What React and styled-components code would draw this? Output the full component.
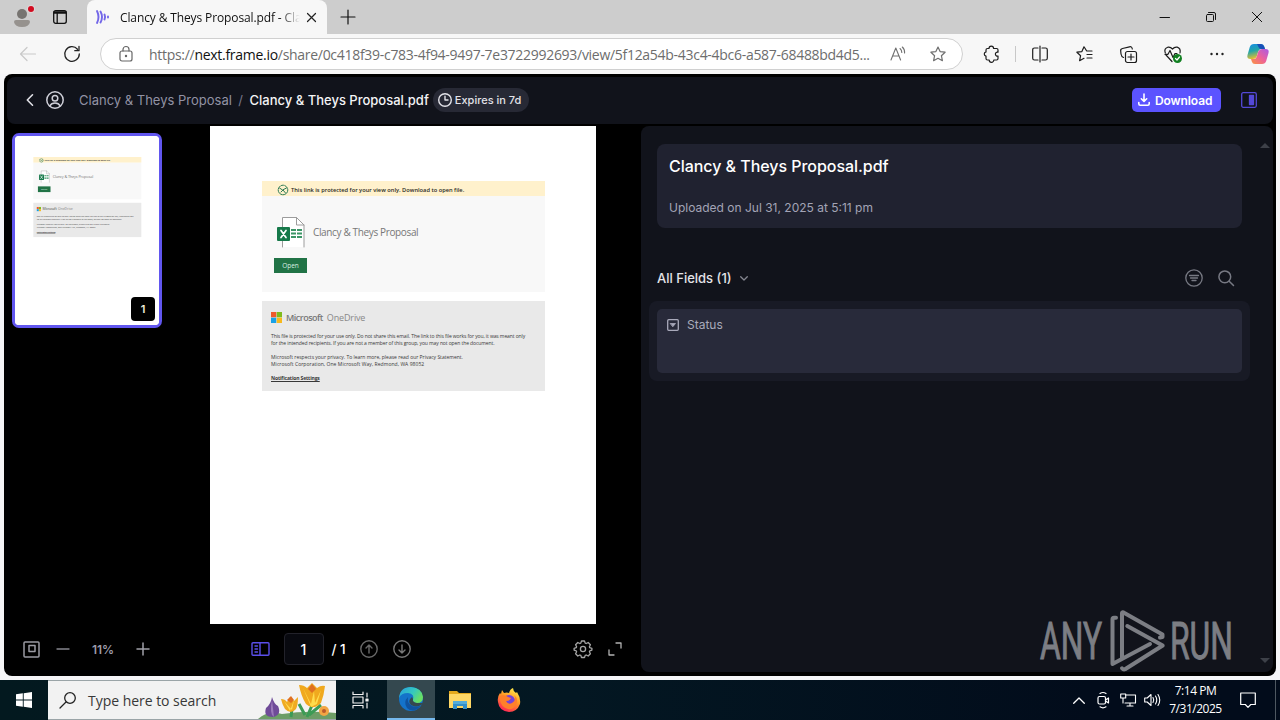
import React from "react";
import styled, { createGlobalStyle } from "styled-components";

const GlobalStyle = createGlobalStyle`
    * {
        box-sizing: border-box;
    }
    body {
        margin: 0;
        overflow: hidden;
        background: #f7f7f7;
        font-family: "Open Sans", "Noto Sans", sans-serif;
    }
    svg {
        display: block;
        flex: none;
        overflow: visible;
    }
`;

const Screen = styled.div`
    width: 1280px;
    height: 720px;
    display: flex;
    flex-direction: column;
    white-space: nowrap;
`;

const Label = styled.span`
    font-size: ${(props) => props.size}px;
    font-weight: ${(props) => props.weight || 400};
    letter-spacing: ${(props) => props.track || 0}px;
    color: ${(props) => props.color || "inherit"};
`;

/* browser */

const TabStrip = styled.div`
    height: 34px;
    flex: none;
    display: flex;
    background: #cdcdcd;
`;

const Slot = styled.div`
    width: ${(props) => props.w}px;
    height: 100%;
    flex: none;
    display: flex;
    align-items: center;
    justify-content: center;
`;

const Tab = styled.div`
    width: 240px;
    height: 34px;
    display: flex;
    align-items: center;
    padding: 0 9px 0 8px;
    background: #f7f7f7;
    border-radius: 8px 8px 0 0;
`;

const TabTitle = styled.div`
    width: 185px;
    flex: none;
    margin-left: 10px;
    font-size: 12px;
    letter-spacing: -0.12px;
    color: #111;
    mask-image: linear-gradient(to right, #000 160px, transparent 180px);
`;

const WindowButtons = styled.div`
    margin-left: auto;
    display: flex;
`;

const Toolbar = styled.div`
    height: 40px;
    flex: none;
    display: flex;
    align-items: center;
    background: #f7f7f7;
`;

const AddressBar = styled.div`
    width: 863px;
    height: 32px;
    margin: 0 7px 0 6px;
    display: flex;
    align-items: center;
    padding-left: 17px;
    background: #fff;
    border: 1px solid #d0d0d0;
    border-radius: 16px;
`;

const Url = styled.div`
    width: 723px;
    margin-left: 15px;
    font-size: 14px;
    letter-spacing: -0.29px;
    color: #6d6d6d;
    b {
        font-weight: 400;
        color: #111;
    }
`;

const Divider = styled.div`
    width: 1px;
    height: 16px;
    margin: 0 2px 0 1px;
    background: #c8c8c8;
`;

/* share page */

const Viewport = styled.div`
    height: 606px;
    flex: none;
    padding: 0 4px 4px;
    background: #f5f5f7;
`;

const Share = styled.div`
    height: 602px;
    padding: 3px 3px 4px;
    display: flex;
    flex-direction: column;
    gap: 2px;
    background: #000;
    border-radius: 8px;
    font-family: Inter, sans-serif;
`;

const Header = styled.div`
    height: 47px;
    flex: none;
    display: flex;
    align-items: center;
    padding: 0 16px 1px 19px;
    background: #11131b;
    border-radius: 8px;
`;

const Crumbs = styled.div`
    display: flex;
    align-items: center;
    gap: 6.5px;
    margin-left: 3px;
`;

const Badge = styled.div`
    width: 96px;
    height: 24px;
    margin-left: 4px;
    display: flex;
    align-items: center;
    gap: 3px;
    padding-left: 5px;
    background: #272935;
    color: #e2e2e8;
    border-radius: 12px;
`;

const DownloadButton = styled.div`
    width: 89px;
    height: 24px;
    margin: 0 20px 0 auto;
    display: flex;
    align-items: center;
    gap: 5px;
    padding-left: 6px;
    background: #5b53ff;
    color: #fff;
    border-radius: 5px;
`;

const Body = styled.div`
    flex: 1;
    display: flex;
`;

const Viewer = styled.div`
    width: 634px;
    display: flex;
    flex-direction: column;
`;

const Stage = styled.div`
    height: 498px;
    display: flex;
    align-items: flex-start;
`;

const Thumb = styled.div`
    position: relative;
    width: 150px;
    height: 195px;
    margin: 7px 48px 0 5px;
    overflow: hidden;
    background: #fff;
    border: 3px solid #6156ef;
    border-radius: 7px;
`;

const Shrink = styled.div`
    width: 144px;
    height: 189px;
    transform: translate(-1.5px, 0) scale(0.3816);
    transform-origin: 0 0;
`;

const ThumbNumber = styled.div`
    position: absolute;
    right: 4px;
    bottom: 4px;
    width: 24px;
    height: 24px;
    display: flex;
    align-items: center;
    justify-content: center;
    background: #000;
    color: #f2f0dc;
    border-radius: 4px;
    font-size: 11px;
    font-weight: 600;
`;

const Sheet = styled.div`
    width: 386px;
    height: 498px;
    padding: 55px 51px 0 52px;
    background: #fff;
    font-family: "Open Sans", sans-serif;
`;

const Notice = styled.div`
    height: 15px;
    display: flex;
    align-items: center;
    gap: 2px;
    padding: 2px 0 0 15px;
    background: #fff1cc;
    color: #2a2a24;
`;

const FileCard = styled.div`
    height: 96px;
    padding: 21px 12px 0;
    background: #f8f8f8;
`;

const FileRow = styled.div`
    display: flex;
    align-items: center;
    gap: 7px;
    padding-left: 3px;
    color: #777;
`;

const OpenButton = styled.div`
    width: 33px;
    height: 15px;
    margin-top: 11px;
    display: flex;
    align-items: center;
    justify-content: center;
    background: #217346;
    color: #d9eee1;
`;

const Footer = styled.div`
    height: 90px;
    margin-top: 9px;
    padding: 10px 0 0 9px;
    background: #e9e9e9;
    color: #383838;
`;

const Brand = styled.div`
    height: 12px;
    display: flex;
    align-items: center;
    gap: 4px;
`;

const Line = styled.div`
    height: 7px;
    margin-top: ${(props) => props.top || 0}px;
    font-size: 5px;
    line-height: 7px;
    letter-spacing: ${(props) => props.track || 0}px;
    font-weight: ${(props) => props.weight || 400};
    text-decoration: ${(props) => (props.link ? "underline" : "none")};
`;

const Controls = styled.div`
    height: 50px;
    display: flex;
    align-items: center;
    padding: 0 18px 0 15.5px;
    color: #85858d;
`;

const PageInput = styled.div`
    width: 40px;
    height: 32px;
    margin: 0 8px 0 14px;
    display: flex;
    align-items: center;
    justify-content: center;
    background: #08090f;
    border: 1px solid #22222a;
    border-radius: 4px;
    color: #fff;
    font-size: 14px;
    font-weight: 500;
`;

const Details = styled.div`
    position: relative;
    width: 632px;
    height: 546px;
    padding: 18px 23px 0 8px;
    background: #11131b;
    border-radius: 8px;
`;

const InfoCard = styled.div`
    height: 84px;
    margin: 0 8px;
    padding: 12px 12px 10px;
    display: flex;
    flex-direction: column;
    justify-content: space-between;
    background: #202230;
    border-radius: 8px;
    line-height: 20px;
    color: #fff;
`;

const FieldsHeader = styled.div`
    height: 32px;
    margin: 34px 8px 7px;
    display: flex;
    align-items: center;
    padding-right: 8px;
    color: #e3e3e8;
`;

const FieldTools = styled.div`
    margin-left: auto;
    display: flex;
    align-items: center;
    gap: 15px;
`;

const FieldGroup = styled.div`
    height: 80px;
    padding: 8px;
    background: #181a25;
    border-radius: 8px;
`;

const Field = styled.div`
    height: 64px;
    display: flex;
    align-items: flex-start;
    gap: 8px;
    padding: 7px 10px;
    background: #282a3a;
    border-radius: 5px;
    color: #a9aabb;
    line-height: 18px;
    svg {
        margin-top: 3px;
    }
`;

const ScrollArrow = styled.div`
    position: absolute;
    right: 3px;
    ${(props) => (props.down ? "bottom: 9px" : "top: 17px")};
    border: 5px solid transparent;
    border-top-width: ${(props) => (props.down ? 5 : 0)}px;
    border-bottom-width: ${(props) => (props.down ? 0 : 5)}px;
    border-${(props) => (props.down ? "top" : "bottom")}-color: #3d4048;
`;

const Watermark = styled.div`
    position: absolute;
    left: 397px;
    top: 483px;
`;

/* taskbar */

const Taskbar = styled.div`
    height: 40px;
    flex: none;
    display: flex;
    background: linear-gradient(to right, #03191f, #031722 45%, #020c1b 85%);
    color: #fff;
`;

const SearchBox = styled.div`
    width: 288px;
    height: 40px;
    display: flex;
    align-items: center;
    background: #f2f2f2;
    border: 1px solid #9aa4a7;
    border-width: 1px 0;
    padding-left: 11px;
    color: #383838;
`;

const SearchHint = styled.div`
    width: 170px;
    margin-left: 11px;
`;

const TaskButton = styled(Slot)`
    padding-right: ${(props) => props.nudge || 0}px;
    margin-left: ${(props) => props.gap || 0}px;
    background: ${(props) => (props.active ? "#34484f" : "transparent")};
    border-bottom: ${(props) => (props.active ? "2px solid #76b9ed" : "none")};
`;

const Tray = styled.div`
    margin-left: auto;
    display: flex;
`;

const Clock = styled.div`
    width: 62px;
    padding: 2px 0 0 1px;
    text-align: center;
    font-size: 12px;
    line-height: 18px;
    letter-spacing: -0.48px;
`;

const ShowDesktop = styled.div`
    width: 5px;
    border-left: 1px solid #4e5861;
`;

const Icon = ({ w = 20, h = w, stroke = 1, fill = "none", color = "currentColor", children }) => (
    <svg
        width={w}
        height={h}
        viewBox={`0 0 ${w} ${h}`}
        fill={fill}
        stroke={color}
        strokeWidth={stroke}
        strokeLinecap="round"
        strokeLinejoin="round"
    >
        {children}
    </svg>
);

const STAR = "M8 1l2.1 4.6 5 .6-3.7 3.5 1 5L8 12.3l-4.4 2.4 1-5L.9 6.2l5-.6z";

const Tabs = () => (
    <TabStrip>
        <Slot w={44}>
            <Icon w={22} h={20} color="none">
                <circle cx="11" cy="7" r="5" fill="#777471" />
                <path d="M3 15q0-2 2-2h12q2 0 2 2-1 5-8 5t-8-5z" fill="#96928e" />
                <circle cx="20" cy="2" r="4" fill="#ded6d6" />
                <circle cx="20" cy="2" r="3" fill="#d20b20" />
            </Icon>
        </Slot>
        <Slot w={32}>
            <Icon w={14} h={14} color="#111" stroke={1.3}>
                <rect x=".7" y=".7" width="12.6" height="12.6" rx="2" />
                <path d="M1 2h12M1 3.2h12M4.2 4v9" />
            </Icon>
        </Slot>
        <Slot w={11} />
        <Tab>
            <Icon w={15} h={16} color="#7367e8" stroke={1.9}>
                <path d="M2 2q3 6 0 12M5.5 2.500q3 5.500 0 11M9.500 5.500q1.200 2.500 0 5M13 7.500v1" />
            </Icon>
            <TabTitle>Clancy &amp; Theys Proposal.pdf - Cla</TabTitle>
            <Slot w={12}>
                <Icon w={9} color="#222" stroke={1.2}>
                    <path d="M.5.5l8 8M8.500.500l-8 8" />
                </Icon>
            </Slot>
        </Tab>
        <Slot w={42}>
            <Icon w={14} color="#111" stroke={1.2}>
                <path d="M7 0v14M0 7h14" />
            </Icon>
        </Slot>
        <WindowButtons>
            <Slot w={46}>
                <Icon w={10} color="#111">
                    <path d="M0 5.500h9.500" />
                </Icon>
            </Slot>
            <Slot w={46}>
                <Icon w={10} color="#111">
                    <rect x=".5" y="2.500" width="7" height="7" rx="1" />
                    <path d="M2.500.5H8Q9.500.5 9.500 2v5.500" />
                </Icon>
            </Slot>
            <Slot w={46}>
                <Icon w={10} color="#111">
                    <path d="M.3.3l9.400 9.400M9.700.3L.3 9.700" />
                </Icon>
            </Slot>
        </WindowButtons>
    </TabStrip>
);

const AddressRow = () => (
    <Toolbar>
        <Slot w={50}>
            <svg width="6" height="1" />
            <Icon w={16} h={14} color="#c9c9c9" stroke={1.2}>
                <path d="M15.500 7H.5M7 .5L.5 7 7 13.500" />
            </Icon>
        </Slot>
        <Slot w={44}>
            <Icon w={16} color="#222" stroke={1.3}>
                <path d="M15.300 8A7.300 7.300 0 1 1 13.500 3.200M15 0.500v4.200h-4.200" />
            </Icon>
        </Slot>
        <AddressBar>
            <Icon w={16} color="#666" stroke={1.2}>
                <rect x="2" y="5" width="12" height="10" rx="2" />
                <path d="M5 5V3.500a3 3 0 0 1 6 0V5" />
                <circle cx="8" cy="10" r=".6" fill="#666" />
            </Icon>
            <Url>
                https://<b>next.frame.io</b>
                /share/0c418f39-c783-4f94-9497-7e3722992693/view/5f12a54b-43c4-4bc6-a587-68488bd4d5...
            </Url>
            <Slot w={52}>
                <Icon w={16} color="#707070" stroke={1.1}>
                    <path d="M1 14L5.800 2l4.800 12M2.700 10h6.200M10 2.500q1.800 1.500 1.800 4M12.300 1q2.500 2.200 2.300 6" />
                </Icon>
            </Slot>
            <Slot w={28}>
                <Icon w={16} color="#707070" stroke={1.2}>
                    <path d={STAR} />
                </Icon>
            </Slot>
        </AddressBar>
        <Slot w={44}>
            <Icon w={16} color="#1d1d1d" stroke={1.2}>
                <path d="M5 2.500a2.300 2.300 0 0 1 4.600 0h3q1.400 0 1.400 1.400v2.300a2 2 0 1 0 0 3.800v2.500q0 1.500-1.400 1.500H9.800a2.300 2.300 0 0 1-4.600 0H3.500Q2 14 2 12.500v-2.300a2.200 2.200 0 0 1 0-4.300V4q0-1.500 1.500-1.500z" />
            </Icon>
        </Slot>
        <Divider />
        <Slot w={44}>
            <Icon w={16} color="#1d1d1d" stroke={1.2}>
                <path d="M6 2H2.500Q.7 2 .7 3.800v8.400q0 1.800 1.800 1.800H6M8 0v16M10 2h3.500q1.800 0 1.800 1.800v8.400q0 1.800-1.800 1.800H10" />
            </Icon>
        </Slot>
        <Slot w={44}>
            <Icon w={17} h={16} color="#1d1d1d" stroke={1.2}>
                <path d="M16 5h-5.300L8 .8 5.900 5.600l-5 .6 3.700 3.500-1 5L8 12.300M11 8.500h5M11 12h5" />
            </Icon>
        </Slot>
        <Slot w={44}>
            <Icon w={17} h={17} color="#1d1d1d" stroke={1.2}>
                <rect x="5.500" y="5.500" width="11" height="11" rx="2" />
                <path d="M11 8v6M8 11h6M3.500 11.500Q1.500 11 1 8L.7 5Q.3 3 2.500 2.500L9.500.8Q12 .3 12.300 3" />
            </Icon>
        </Slot>
        <Slot w={46}>
            <Icon w={18} h={17} color="#1d1d1d" stroke={1.2}>
                <path d="M1.300 7Q-.3 2.500 3.800 1.200 6.500.7 8.500 3 10.500.7 13.200 1.200 17 2.300 16 7M2 9l6 6.500M1 8.300h3L6 4.500l3 7 2-4h2" />
                <circle cx="13.500" cy="12.500" r="4.500" fill="#128022" stroke="none" />
                <path d="M11.500 12.500l1.500 1.500 2.500-3" stroke="#fff" />
            </Icon>
        </Slot>
        <Slot w={41}>
            <Icon w={14} h={4} fill="#222" color="none">
                <circle cx="1.500" cy="2" r="1.200" />
                <circle cx="7" cy="2" r="1.200" />
                <circle cx="12.500" cy="2" r="1.200" />
            </Icon>
        </Slot>
        <Slot w={41}>
            <Icon w={22} h={20} color="none">
                <defs>
                    <linearGradient id="cpA" x1="0" y1="0" x2=".3" y2="1">
                        <stop stopColor="#188ce8" />
                        <stop offset=".5" stopColor="#22a5a9" />
                        <stop offset="1" stopColor="#e9bf2d" />
                    </linearGradient>
                    <linearGradient id="cpB" x1="1" y1="0" x2="0" y2="1">
                        <stop stopColor="#a95be6" />
                        <stop offset=".5" stopColor="#ed619b" />
                        <stop offset="1" stopColor="#fb963f" />
                    </linearGradient>
                </defs>
                <path d="M7 0h7q2.500 0 3.200 2.500L18 5h-4q-2 0-2.800 2.500l-1.500 5Q8.700 15 6 15H3.500Q-.5 15 .5 11l2.300-8Q3.700 0 7 0z" fill="url(#cpA)" />
                <path d="M10 0h4q2.500 0 3.200 2.500L18 5h-4q-2 0-2.500-2z" fill="#1850b8" />
                <path d="M15 20H8q-2.500 0-3.200-2.500L4 15h3q2 0 2.800-2.500l1.500-5Q12.300 5 15 5h3.500q4 0 3 4l-2.300 8Q18.300 20 15 20z" fill="url(#cpB)" />
            </Icon>
        </Slot>
    </Toolbar>
);

const PdfPage = () => (
    <Sheet>
        <Notice>
            <Icon w={12} color="#2c7b55">
                <circle cx="6" cy="6" r="4.800" strokeDasharray="3 1" />
                <path d="M2.500 4l3 2 4-2M4 8l2-2 2.500 3" />
            </Icon>
            <Label size={5.7} weight={600} track={0.01}>
                This link is protected for your view only. Download to open file.
            </Label>
        </Notice>
        <FileCard>
            <FileRow>
                <Icon w={29} h={30} color="none">
                    <path d="M5.500 30V.5h14l7.500 7.500v22" fill="#fff" stroke="#9c9c9c" />
                    <path d="M19.500 .5V8H27" stroke="#9c9c9c" />
                    <path d="M14 12h5v2h-5zm6 0h5v2h-5zm-6 3.500h5v2h-5zm6 0h5v2h-5zm-6 3.500h5v2h-5zm6 0h5v2h-5z" fill="#3c9566" />
                    <rect x="0" y="10" width="13" height="14" rx="1" fill="#16794a" />
                    <path d="M4 13.500l5 7M9 13.500l-5 7" stroke="#fff" strokeWidth="1.700" />
                </Icon>
                <Label size={10} track={-0.36}>
                    Clancy &amp; Theys Proposal
                </Label>
            </FileRow>
            <OpenButton>
                <Label size={6.5}>Open</Label>
            </OpenButton>
        </FileCard>
        <Footer>
            <Brand>
                <Icon w={11} color="none">
                    <rect width="5.300" height="5.300" fill="#ef5a2c" />
                    <rect x="5.700" width="5.300" height="5.300" fill="#80bb1c" />
                    <rect y="5.700" width="5.300" height="5.300" fill="#19a1e6" />
                    <rect x="5.700" y="5.700" width="5.300" height="5.300" fill="#f8b91c" />
                </Icon>
                <Label size={9} weight={600} track={-0.5} color="#777">
                    Microsoft
                </Label>
                <Label size={9} track={-0.15} color="#888">
                    OneDrive
                </Label>
            </Brand>
            <Line top={10} track={-0.095}>
                This file is protected for your use only. Do not share this email. The link to this file works for you, it was meant only
            </Line>
            <Line track={-0.09}>
                for the intended recipients. If you are not a member of this group, you may not open the document.
            </Line>
            <Line top={7}>
                Microsoft respects your privacy. To learn more, please read our Privacy Statement.
            </Line>
            <Line track={0.06}>Microsoft Corporation, One Microsoft Way, Redmond, WA 98052</Line>
            <Line top={7} weight={700} track={-0.13} link>
                Notification Settings
            </Line>
        </Footer>
    </Sheet>
);

const ShareHeader = () => (
    <Header>
        <Icon w={8} h={12} color="#e1e1e7" stroke={1.6}>
            <path d="M6.500.8L1.300 6l5.200 5.200" />
        </Icon>
        <Slot w={42}>
            <Icon w={18} color="#cfcfd8" stroke={1.5}>
                <circle cx="9" cy="9" r="8.200" />
                <circle cx="9" cy="7.300" r="2.800" />
                <path d="M3.800 15q1.500-3 5.200-3t5.200 3" />
            </Icon>
        </Slot>
        <Crumbs>
            <Label size={13} color="#9292a4">
                Clancy &amp; Theys Proposal
            </Label>
            <Label size={13} color="#77778a">
                /
            </Label>
            <Label size={13} weight={500} color="#f4f4f6">
                Clancy &amp; Theys Proposal.pdf
            </Label>
        </Crumbs>
        <Badge>
            <Icon w={14} stroke={1.4}>
                <circle cx="7" cy="7" r="6.300" />
                <path d="M7 3.300V7h3" />
            </Icon>
            <Label size={11} weight={500}>
                Expires in 7d
            </Label>
        </Badge>
        <DownloadButton>
            <Icon w={12} stroke={1.6}>
                <path d="M6 0v7M3.300 4.800L6 7.500l2.700-2.700M.8 8.500v1.300q0 1.400 1.400 1.400h7.600q1.400 0 1.400-1.400V8.500" />
            </Icon>
            <Label size={12} weight={600} track={-0.1}>
                Download
            </Label>
        </DownloadButton>
        <Icon w={16} color="#5449d8" stroke={1.3}>
            <rect x=".7" y=".7" width="14.600" height="14.600" rx="1.500" />
            <rect x="8.500" y="3.500" width="4" height="9" fill="#5449d8" />
        </Icon>
    </Header>
);

const ViewerControls = () => (
    <Controls>
        <Icon w={17} color="#9a9aa2" stroke={1.5}>
            <rect x="1" y="1" width="15" height="15" rx="1" />
            <path d="M6 4.500h6v6H6z" />
        </Icon>
        <Slot w={46}>
            <Icon w={12} stroke={1.3}>
                <path d="M0 6h12" />
            </Icon>
        </Slot>
        <Slot w={35}>
            <Label size={12} weight={600} color="#9b9ba8">
                11%
            </Label>
        </Slot>
        <Slot w={45}>
            <Icon w={12} stroke={1.5} color="#a0a0a8">
                <path d="M0 6h12M6 0v12" />
            </Icon>
        </Slot>
        <Slot w={85} />
        <Icon w={19} h={14} color="#5b4fea" stroke={1.4}>
            <rect x="1" y=".7" width="17" height="12.600" rx="1" />
            <path d="M9 1v12M4 4h2.500M4 7h2.500M4 10h2.500" />
        </Icon>
        <PageInput>1</PageInput>
        <Label size={13.5} weight={500} color="#fff">
            / 1
        </Label>
        <Slot w={47}>
            <Icon w={18} color="#696969" stroke={1.4}>
                <circle cx="9" cy="9" r="8.200" />
                <path d="M9 13V5M6 8l3-3 3 3" />
            </Icon>
        </Slot>
        <Slot w={18}>
            <Icon w={18} color="#777" stroke={1.4}>
                <circle cx="9" cy="9" r="8.200" />
                <path d="M9 5v8M6 10l3 3 3-3" />
            </Icon>
        </Slot>
        <Slot w={163} />
        <Icon w={18} color="#a5a5a5" stroke={1.3}>
            <path d="M7.500 1h3l.7 2.100 1 .4 2-1 2.200 2.200-1 2 .4 1 2.100.6v1.800l-2.100.7-.4 1 1 2-2.200 2.200-2-1-1 .4-.7 2.100h-3l-.7-2.100-1-.4-2 1-2.200-2.200 1-2-.4-1L.1 10.100V8.300l2.100-.6.4-1-1-2 2.200-2.200 2 1 1-.4z" />
            <circle cx="9" cy="9" r="2.600" />
        </Icon>
        <svg width="16" height="1" />
        <Icon w={14} color="#b3b3b3" stroke={1.3}>
            <path d="M8 1h5v5M1 8v5h5" />
        </Icon>
    </Controls>
);

const AnyRun = () => (
    <Watermark>
        <svg width="194" height="64" viewBox="0 0 194 64" fill="#7c7e84" fontFamily="Roboto" fontSize="51">
            <text x="2" y="49.500" textLength="62" lengthAdjust="spacingAndGlyphs" stroke="#7c7e84" strokeWidth="1">
                ANY
            </text>
            <g fill="none" stroke="#7c7e84" strokeWidth="4" strokeLinecap="round" strokeLinejoin="round">
                <path d="M78 8.700h-2q-1.500 0-1.500 1.500V55L112 35" />
                <path d="M84 49V4q0-1 1.500-.5l39 22v2.500l-2.500.5" />
                <path d="M89.300 17l35.400 19.500L87 60.300q-1.500.7-3-1" />
            </g>
            <text x="132" y="49.500" textLength="63" lengthAdjust="spacingAndGlyphs" stroke="#7c7e84" strokeWidth="1">
                RUN
            </text>
        </svg>
    </Watermark>
);

const DetailsPanel = () => (
    <Details>
        <InfoCard>
            <Label size={16} weight={500} track={-0.04}>
                Clancy &amp; Theys Proposal.pdf
            </Label>
            <Label size={12} color="#a3a4b6">
                Uploaded on Jul 31, 2025 at 5:11 pm
            </Label>
        </InfoCard>
        <FieldsHeader>
            <Label size={13} weight={500}>
                All Fields (1)
            </Label>
            <Slot w={25}>
                <Icon w={8} h={5} color="#858690" stroke={1.3}>
                    <path d="M.7.7L4 4 7.300.7" />
                </Icon>
            </Slot>
            <FieldTools>
                <Icon w={18} color="#777983" stroke={1.3}>
                    <circle cx="9" cy="9" r="8.200" />
                    <path d="M4.500 6.500h9M5.500 9h7M7 11.500h4" />
                </Icon>
                <Icon w={16} color="#777983" stroke={1.5}>
                    <circle cx="6.800" cy="6.800" r="5.900" />
                    <path d="M11.200 11.200l4.300 4.300" />
                </Icon>
            </FieldTools>
        </FieldsHeader>
        <FieldGroup>
            <Field>
                <Icon w={12} stroke={1.3}>
                    <rect x=".7" y=".7" width="10.600" height="10.600" rx="1" />
                    <path d="M3.500 4.500h5L6 7.500z" fill="currentColor" strokeWidth=".8" />
                </Icon>
                <Label size={12}>Status</Label>
            </Field>
        </FieldGroup>
        <ScrollArrow />
        <ScrollArrow down />
        <AnyRun />
    </Details>
);

const Flowers = () => (
    <svg width="78" height="38" viewBox="0 0 78 38">
        <path d="M0 38q10-9 24-5 26-4 54-1v6z" fill="#6d9d66" />
        <path d="M33 36l1-8M49 36l6-14M51 34l12-10M47 34l-6-11" stroke="#3c9b55" strokeWidth="3" />
        <path d="M14 16q2 7 6 9 4 9-5 11-10 0-7-9 5-4 6-11z" fill="#6f4b98" />
        <path d="M14 19l2 17q-5-3-2-17z" fill="#9b79ba" />
        <path d="M23 18q4 0 6 3l3-5 4 4 4-4q0 8-2 12-5 6-11 0-3-5-4-10z" fill="#f0ab20" />
        <path d="M26 20l6 10 4-11-2 10z" fill="#ffdc53" />
        <path d="M41 4q5 0 8 3l5-5 5 5q4-3 8-2-1 9-4 17-8 8-15 1-5-8-7-19z" fill="#f0a91e" />
        <path d="M45 7l8 16 3-13 1 12 6-13-4 14-6 3z" fill="#ffdc4c" />
        <path d="M50 8l4-5 4 5-4 4zM29 19l4-4 3 4-3 3z" fill="#df7020" />
        <circle cx="66" cy="30" r="5" fill="#f2a543" />
        <circle cx="66" cy="30" r="2" fill="#b95b2c" />
    </svg>
);

const WindowsBar = () => (
    <Taskbar>
        <Slot w={48}>
            <Icon w={16} fill="#fff" color="none">
                <path d="M0 2.300l6.800-1v6.300H0zM7.700 1.200L16 0v7.600H7.700zM0 8.500h6.800v6.300l-6.800-1zM7.700 8.500H16V16l-8.300-1.200z" />
            </Icon>
        </Slot>
        <SearchBox>
            <Icon w={18} color="#222" stroke={1.3}>
                <circle cx="11" cy="7" r="5.300" />
                <path d="M7 11L1 17" />
            </Icon>
            <SearchHint>
                <Label size={14} track={-0.03}>
                    Type here to search
                </Label>
            </SearchHint>
            <Flowers />
        </SearchBox>
        <TaskButton w={51} nudge={3}>
            <Icon w={17} h={16} color="#f1f1f1" stroke={1.2}>
                <path d="M1 0v2.500h10V0M1 16v-2.500h10V16M1 5h10v6H1zM15 1v4M15 11v5" />
                <path d="M14 7h2v2h-2z" fill="#fff" />
            </Icon>
        </TaskButton>
        <TaskButton w={48} active>
            <svg width="24" height="24" viewBox="0 0 24 24">
                <defs>
                    <linearGradient id="edA" x1="0" y1="0" x2="1" y2=".5">
                        <stop stopColor="#279fe1" />
                        <stop offset=".6" stopColor="#35c8be" />
                        <stop offset="1" stopColor="#69df63" />
                    </linearGradient>
                </defs>
                <circle cx="12" cy="12" r="12" fill="#1473ca" />
                <path d="M0 11Q1 0 12 0q11 1 12 10 0 6-6 6-5 0-4-3Q16 7 9 6 2 6 0 11z" fill="url(#edA)" />
                <path d="M9 10q-5 5-1 11 3 3 7 2.500 4-1 7-5-7 3-11-1-3-3-2-7.500z" fill="#10539f" />
                <path d="M13 10q-5 4-1 8 5 3 11-.5l1-1V16h-6q-5-1-4-4z" fill="#34484f" />
            </svg>
        </TaskButton>
        <TaskButton w={48} gap={1}>
            <svg width="22" height="20" viewBox="0 0 22 20">
                <path d="M0 1h8l2 2h12v15H0z" fill="#e5a91d" />
                <path d="M0 4h22v14H0z" fill="#ffd765" />
                <path d="M4 12h14v7h-4v-3H8v3H4z" fill="#348fc9" />
                <path d="M4 11h14v3H4z" fill="#55acd9" />
            </svg>
        </TaskButton>
        <TaskButton w={48} gap={1}>
            <svg width="24" height="24" viewBox="0 0 24 24">
                <defs>
                    <linearGradient id="ffA" x1=".8" y1="0" x2=".3" y2="1">
                        <stop stopColor="#fff34d" />
                        <stop offset=".45" stopColor="#ff9925" />
                        <stop offset="1" stopColor="#ff2258" />
                    </linearGradient>
                </defs>
                <path d="M5 2l2 3q3-1 5 0 1-4 4-5 0 3 3 5l1-1q4 6 3 12-3 8-11 8Q2 23 1 14 0 9 3 5l1 1z" fill="url(#ffA)" />
                <circle cx="12" cy="13" r="6" fill="#7543d8" />
                <path d="M3 8q5-2 8 1l3 1q-1 3-5 3 2 4 6 2 5-3 2-8 5 4 2 10-3 5-8 4-7-2-8-9z" fill="#ff802b" />
            </svg>
        </TaskButton>
        <Tray>
            <Slot w={24}>
                <Icon w={12} h={7} stroke={1.3}>
                    <path d="M.7 6.300L6 1l5.300 5.300" />
                </Icon>
            </Slot>
            <Slot w={25}>
                <Icon w={11} h={16} stroke={1.2}>
                    <rect x="0" y="4.500" width="7.500" height="7.500" rx="1.500" />
                    <path d="M7.500 8l3-2v5l-3-2M2 1.500q3-2 6 0M2 14.800q3 2 6 0" />
                </Icon>
            </Slot>
            <Slot w={24}>
                <Icon w={17} h={14} stroke={1.1}>
                    <path d="M5.500 2h10v8H5M10 10v3M7 13h6M.7 1h5v4h-5zM3 5v5" />
                </Icon>
            </Slot>
            <Slot w={24}>
                <Icon w={17} h={14} stroke={1.1}>
                    <path d="M.7 5h2.500L7 1.500v11L3.200 9H.7zM9 4.500q1.500 2.500 0 5M11.500 3q2.500 4 0 8M14 1.500q3.500 5.500 0 11" />
                </Icon>
            </Slot>
            <Clock>
                <div>7:14 PM</div>
                <div>7/31/2025</div>
            </Clock>
            <Slot w={43}>
                <Icon w={16} stroke={1.2}>
                    <path d="M.7 1h14.600v11.500h-4.500L8 15.300l-2.700-2.800H.7z" />
                </Icon>
            </Slot>
            <Slot w={6} />
            <ShowDesktop />
        </Tray>
    </Taskbar>
);

const App = () => (
    <Screen>
        <GlobalStyle />
        <Tabs />
        <AddressRow />
        <Viewport>
            <Share>
                <ShareHeader />
                <Body>
                    <Viewer>
                        <Stage>
                            <Thumb>
                                <Shrink>
                                    <PdfPage />
                                </Shrink>
                                <ThumbNumber>1</ThumbNumber>
                            </Thumb>
                            <PdfPage />
                        </Stage>
                        <ViewerControls />
                    </Viewer>
                    <DetailsPanel />
                </Body>
            </Share>
        </Viewport>
        <WindowsBar />
    </Screen>
);

export default App;
